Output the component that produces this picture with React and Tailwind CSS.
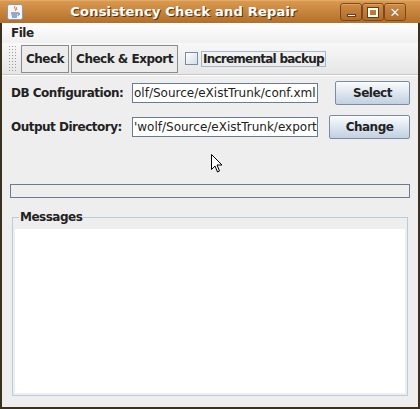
import React from 'react';

const font = { fontFamily: '"DejaVu Sans", Verdana, sans-serif' };

const JavaIcon = () => (
  <svg width="16" height="16" viewBox="0 0 16 16">
    <rect x="0.5" y="0.5" width="15" height="15" rx="2" fill="#f4f6fa" stroke="#8a98b0" />
    <path d="M8 2c-2 2 2 3 0 5M9.5 3c-1 1 1 2 0 3" stroke="#e06a1a" strokeWidth="1" fill="none" />
    <path d="M4 9h7M4.5 11h6M5 13h5" stroke="#3a5c9c" strokeWidth="1" />
    <path d="M11 9c2 0 2 2 0 2" stroke="#3a5c9c" strokeWidth="1" fill="none" />
  </svg>
);

const WinButton = ({ children }) => (
  <div className="w-[22px] h-[18px] rounded-[3px] border border-[#7a4a1c] bg-gradient-to-b from-[#cf8c44] to-[#b16c2a] flex items-center justify-center shadow-[inset_0_1px_0_#e0a462]">
    {children}
  </div>
);

const ToolButton = ({ children }) => (
  <div className="h-[28px] px-[4px] border border-[#8c8c8c] bg-[#ececec] flex items-center text-[12px] font-bold tracking-[-0.5px] text-[#222]">
    {children}
  </div>
);

const Field = ({ value }) => (
  <div className="w-[186px] h-[20px] border border-[#6a7c94] bg-white overflow-hidden flex items-center text-[12px] text-[#222] leading-none">
    <span className="whitespace-nowrap pl-[1px]">{value}</span>
  </div>
);

const DialogButton = ({ children, w }) => (
  <div className={`${w} h-[24px] border border-[#7a8ba3] rounded-[2px] bg-gradient-to-b from-[#fbfcfd] via-[#dde6f0] to-[#c2d0e0] flex items-center justify-center text-[12px] font-bold tracking-[-0.5px] text-[#222]`}>
    {children}
  </div>
);

export default function App() {
  return (
    <div style={font} className="w-[420px] h-[409px] bg-[#3a3020] flex flex-col overflow-hidden">
      {/* title bar */}
      <div className="h-[23px] bg-gradient-to-b from-[#d9994f] via-[#c7843c] to-[#b36f2c] flex items-center pl-[7px] pr-[14px] border-t border-[#e2ab6a]">
        <JavaIcon />
        <div className="flex-1 text-center text-white font-bold text-[13px] tracking-[0.2px] [text-shadow:1px_1px_0_#5a3510] pl-[4px]">
          Consistency Check and Repair
        </div>
        <div className="flex">
          <WinButton>
            <div className="w-[9px] h-[3px] bg-white border border-[#6a3c10] mt-[6px]" />
          </WinButton>
          <WinButton>
            <div className="w-[10px] h-[9px] border-2 border-white outline outline-1 outline-[#6a3c10]" />
          </WinButton>
          <WinButton>
            <span className="text-white font-bold text-[13px] leading-none [text-shadow:0_0_1px_#6a3c10]">✕</span>
          </WinButton>
        </div>
      </div>

      {/* window body */}
      <div className="flex-1 mx-[2px] mb-[2px] bg-[#eeeeee] flex flex-col">
        {/* menu bar */}
        <div className="h-[20px] bg-gradient-to-b from-white to-[#f0f0f0] flex items-center pl-[9px] text-[12px] font-bold tracking-[-0.5px] text-[#222]">
          File
        </div>
        {/* toolbar */}
        <div className="h-[32px] bg-gradient-to-b from-[#f8f8f8] to-[#e6e6e6] flex items-center pl-[6px] gap-[2px] border-b border-[#c8c8c8]">
          <div className="w-[9px] h-[28px] bg-[radial-gradient(#9a9a9a_0.6px,transparent_0.8px)] bg-[length:3px_3px] mr-[2px]" />
          <ToolButton>Check</ToolButton>
          <ToolButton>Check &amp; Export</ToolButton>
          <div className="flex items-center ml-[5px] gap-[3px]">
            <div className="w-[13px] h-[13px] border border-[#7a8ba3] bg-gradient-to-br from-white to-[#d3dde9]" />
            <div className="h-[16px] border border-[#a3b8cf] px-[1px] flex items-center text-[12px] font-bold tracking-[-0.75px] text-[#222]">
              Incremental backup
            </div>
          </div>
        </div>
        <div className="h-[1px] bg-white" />

        {/* form rows */}
        <div className="flex items-center mt-[5px] pl-[9px] h-[24px]">
          <span className="w-[121px] text-[12px] font-bold tracking-[-0.5px] text-[#222]">DB Configuration:</span>
          <Field value="olf/Source/eXistTrunk/conf.xml" />
          <div className="ml-[17px]">
            <DialogButton w="w-[75px]">Select</DialogButton>
          </div>
        </div>
        <div className="flex items-center mt-[10px] pl-[9px] h-[24px]">
          <span className="w-[121px] text-[12px] font-bold tracking-[-0.5px] text-[#222]">Output Directory:</span>
          <Field value="'wolf/Source/eXistTrunk/export" />
          <div className="ml-[11px]">
            <DialogButton w="w-[81px]">Change</DialogButton>
          </div>
        </div>

        {/* progress bar */}
        <div className="mt-[45px] mx-[8px] h-[14px] border border-[#6a7c94] bg-[#eeeeee]" />

        {/* messages */}
        <div className="relative mt-[19px] mx-[10px] h-[179px] border border-[#b8cce0] p-[2px] pt-[11px]">
          <span className="absolute left-[6px] -top-[9px] bg-[#eeeeee] px-[1px] text-[12px] font-bold tracking-[-0.5px] text-[#222] leading-[16px]">
            Messages
          </span>
          <div className="w-full h-full bg-white" />
        </div>
      </div>

      {/* mouse cursor */}
      <svg className="absolute left-[211px] top-[154px]" width="13" height="20" viewBox="0 0 13 20">
        <path d="M0.5 0.5V15.5L4 12L6.5 18L8.5 17L6 11H11Z" fill="#fff" stroke="#000" strokeWidth="1" />
      </svg>
    </div>
  );
}
